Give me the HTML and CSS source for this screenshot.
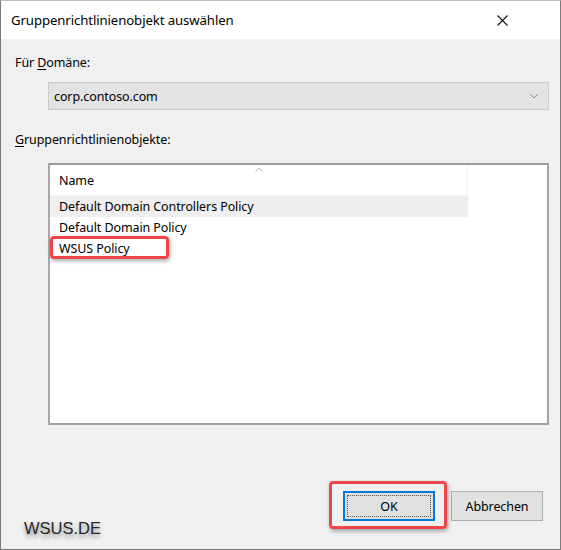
FILE: index.html
```html
<!DOCTYPE html>
<html lang="de">
<head>
  <meta charset="UTF-8">
  <title>Gruppenrichtlinienobjekt auswählen</title>
  <link rel="stylesheet" href="styles.css">
</head>
<body>
  <div class="window">
    <div class="titlebar">
      <span class="title">Gruppenrichtlinienobjekt auswählen</span>
      <svg class="close" width="11" height="11" viewBox="0 0 11 11">
        <path d="M0.5 0.5 L10.5 10.5 M10.5 0.5 L0.5 10.5" stroke="#111" stroke-width="1.1" fill="none"/>
      </svg>
    </div>

    <div class="content">
      <label class="field-label">Für <u>D</u>omäne:</label>
      <div class="combo">
        <span>corp.contoso.com</span>
        <svg class="chevron" width="8" height="5" viewBox="0 0 8 5">
          <path d="M0.5 0.5 L4 4 L7.5 0.5" stroke="#888" stroke-width="1" fill="none"/>
        </svg>
      </div>

      <label class="field-label second"><u>G</u>ruppenrichtlinienobjekte:</label>
      <div class="listview">
        <div class="list-header">
          <div class="col-name">
            Name
            <svg class="sort" width="8" height="5" viewBox="0 0 8 5">
              <path d="M0.5 4.5 L4 1 L7.5 4.5" stroke="#b8b8b8" stroke-width="1" fill="none"/>
            </svg>
          </div>
        </div>
        <div class="row hover">Default Domain Controllers Policy</div>
        <div class="row">Default Domain Policy</div>
        <div class="row marked">WSUS Policy<span class="mark mark-row"></span></div>
      </div>

      <div class="buttons">
        <div class="btn-wrap">
          <button class="btn default"><span>OK</span></button>
          <span class="mark mark-ok"></span>
        </div>
        <button class="btn">Abbrechen</button>
      </div>
    </div>

    <div class="watermark">WSUS.DE</div>
  </div>
</body>
</html>
```

FILE: styles.css
```css
body {
  margin: 0;
  padding: 0;
  background-color: #ffffff;
  font-family: 'Noto Sans', 'Segoe UI', sans-serif;
  color: #000;
}
.window {
  position: relative;
  width: 559px;
  height: 548px;
  border: 1px solid #7b7b7b;
  border-top-color: #bdbdbd;
  background-color: #f0f0f0;
  display: flex;
  flex-direction: column;
}
.titlebar {
  height: 38px;
  background-color: #ffffff;
  display: flex;
  align-items: center;
  justify-content: space-between;
  padding: 0 52px 0 10px;
}
.title {
  font-size: 13.2px;
  letter-spacing: -0.1px;
  color: #000;
  margin-top: -1px;
}
.content {
  flex: 1;
  display: flex;
  flex-direction: column;
  padding: 14px 11px 0 14px;
}
.field-label {
  font-size: 12.5px;
  letter-spacing: -0.1px;
  line-height: 20px;
  color: #000;
}
.field-label u {
  text-decoration-thickness: 1px;
  text-underline-offset: 2px;
}
.field-label.second {
  margin-top: 20px;
}
.combo {
  margin: 9px 0 0 33px;
  height: 26px;
  border: 1px solid #cccccc;
  background-color: #e3e3e3;
  display: flex;
  align-items: center;
  justify-content: space-between;
  padding: 0 10px 0 5px;
  font-size: 12.5px;
  letter-spacing: -0.1px;
}
.chevron {
  margin-top: 1px;
}
.listview {
  margin: 13px 0 0 33px;
  height: 258px;
  border: 2px solid #a3a3a3;
  border-top-color: #9a9a9a;
  border-left-color: #a8a8a8;
  background-color: #ffffff;
  font-size: 12.5px;
  letter-spacing: -0.1px;
}
.list-header {
  height: 31px;
  width: 418px;
  border-right: 1px solid #f2f2f2;
  border-bottom: 1px solid #f6f6f6;
  box-sizing: border-box;
}
.col-name {
  position: relative;
  height: 31px;
  line-height: 31px;
  padding-left: 9px;
}
.sort {
  position: absolute;
  left: 205px;
  top: 2px;
}
.row {
  position: relative;
  width: 418px;
  height: 21px;
  line-height: 21px;
  padding-left: 9px;
  box-sizing: border-box;
}
.row.hover {
  background-color: #efefef;
}
.mark {
  position: absolute;
  border: 3px solid #ee4648;
  border-radius: 4px;
  box-shadow: 1px 2px 4px rgba(0, 0, 0, 0.35);
}
.mark-row {
  left: 0;
  top: -2px;
  width: 113px;
  height: 17px;
}
.buttons {
  margin-top: auto;
  margin-bottom: 28px;
  margin-right: 6px;
  display: flex;
  justify-content: flex-end;
  gap: 16px;
}
.btn-wrap {
  position: relative;
}
.btn {
  width: 92px;
  height: 30px;
  font-family: 'Noto Sans', 'Segoe UI', sans-serif;
  font-size: 12.5px;
  letter-spacing: -0.1px;
  color: #000;
  background-color: #e1e1e1;
  border: 1px solid #adadad;
  padding: 0;
}
.btn.default {
  border: 1px solid #0078d7;
  box-shadow: inset 0 0 0 1px #0078d7;
  display: flex;
  align-items: center;
  justify-content: center;
}
.btn.default span {
  display: flex;
  align-items: center;
  justify-content: center;
  width: 82px;
  height: 20px;
  border: 1px dotted #555;
}
.mark-ok {
  left: -14px;
  top: -10px;
  width: 112px;
  height: 42px;
}
.watermark {
  position: absolute;
  left: 23px;
  top: 518px;
  font-family: 'Liberation Sans', Arial, sans-serif;
  font-size: 16.5px;
  color: #262626;
  text-shadow: 0 3px 4px rgba(0, 0, 0, 0.45);
}
```
